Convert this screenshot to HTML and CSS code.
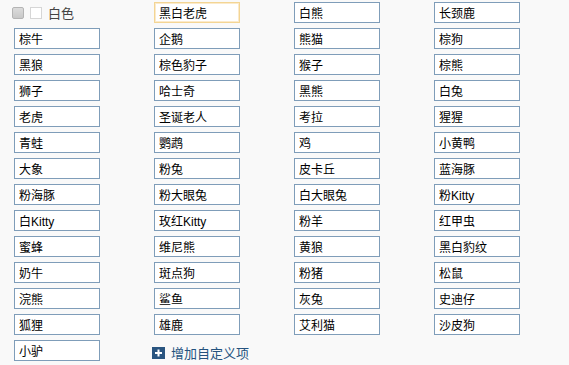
FILE: index.html
```html
<!DOCTYPE html>
<html lang="zh-CN">
<head>
  <meta charset="UTF-8" />
  <title>动物选项</title>
  <link rel="stylesheet" href="styles.css">
</head>
<body>
  <div class="options">
    <div class="cell color-pick">
      <span class="box box-disabled"></span>
      <span class="box"></span>
      <span class="color-label">白色</span>
    </div>
    <input class="opt focused" type="text" value="黑白老虎">
    <input class="opt" type="text" value="白熊">
    <input class="opt" type="text" value="长颈鹿">

    <input class="opt" type="text" value="棕牛">
    <input class="opt" type="text" value="企鹅">
    <input class="opt" type="text" value="熊猫">
    <input class="opt" type="text" value="棕狗">

    <input class="opt" type="text" value="黑狼">
    <input class="opt" type="text" value="棕色豹子">
    <input class="opt" type="text" value="猴子">
    <input class="opt" type="text" value="棕熊">

    <input class="opt" type="text" value="狮子">
    <input class="opt" type="text" value="哈士奇">
    <input class="opt" type="text" value="黑熊">
    <input class="opt" type="text" value="白兔">

    <input class="opt" type="text" value="老虎">
    <input class="opt" type="text" value="圣诞老人">
    <input class="opt" type="text" value="考拉">
    <input class="opt" type="text" value="猩猩">

    <input class="opt" type="text" value="青蛙">
    <input class="opt" type="text" value="鹦鹉">
    <input class="opt" type="text" value="鸡">
    <input class="opt" type="text" value="小黄鸭">

    <input class="opt" type="text" value="大象">
    <input class="opt" type="text" value="粉兔">
    <input class="opt" type="text" value="皮卡丘">
    <input class="opt" type="text" value="蓝海豚">

    <input class="opt" type="text" value="粉海豚">
    <input class="opt" type="text" value="粉大眼兔">
    <input class="opt" type="text" value="白大眼兔">
    <input class="opt" type="text" value="粉Kitty">

    <input class="opt" type="text" value="白Kitty">
    <input class="opt" type="text" value="玫红Kitty">
    <input class="opt" type="text" value="粉羊">
    <input class="opt" type="text" value="红甲虫">

    <input class="opt" type="text" value="蜜蜂">
    <input class="opt" type="text" value="维尼熊">
    <input class="opt" type="text" value="黄狼">
    <input class="opt" type="text" value="黑白豹纹">

    <input class="opt" type="text" value="奶牛">
    <input class="opt" type="text" value="斑点狗">
    <input class="opt" type="text" value="粉猪">
    <input class="opt" type="text" value="松鼠">

    <input class="opt" type="text" value="浣熊">
    <input class="opt" type="text" value="鲨鱼">
    <input class="opt" type="text" value="灰兔">
    <input class="opt" type="text" value="史迪仔">

    <input class="opt" type="text" value="狐狸">
    <input class="opt" type="text" value="雄鹿">
    <input class="opt" type="text" value="艾利猫">
    <input class="opt" type="text" value="沙皮狗">

    <input class="opt" type="text" value="小驴">
    <a class="cell add-link" href="#">
      <span class="add-icon">
        <svg width="13" height="12" viewBox="0 0 13 12">
          <rect x="3" y="5" width="7" height="2" fill="#fff"/>
          <rect x="5.5" y="2.5" width="2" height="7" fill="#fff"/>
        </svg>
      </span>
      增加自定义项
    </a>
  </div>
</body>
</html>
```

FILE: styles.css
```css
body {
  margin: 0;
  background: #f9f9f9;
  font-family: "Liberation Sans", "Noto Sans CJK SC", sans-serif;
  font-size: 12px;
  color: #333;
}

.options {
  display: grid;
  grid-template-columns: repeat(4, 86px);
  grid-auto-rows: 21px;
  column-gap: 54px;
  row-gap: 5px;
  padding: 2px 0 0 14px;
}

.opt {
  box-sizing: border-box;
  width: 86px;
  height: 21px;
  margin: 0;
  padding: 0 4px;
  border: 1px solid #7f9db9;
  background: #fff;
  font-family: "Liberation Sans", "Noto Sans CJK SC", sans-serif;
  font-size: 12px;
  color: #000;
  outline: none;
}

.opt.focused {
  border: 1px solid #f3d594;
  box-shadow: inset 0 0 0 1px #fbeacb;
}

.cell {
  display: flex;
  align-items: center;
}

.color-pick {
  margin-left: -2px;
  gap: 6px;
}

.box {
  box-sizing: border-box;
  width: 12px;
  height: 12px;
  border: 1px solid #d6d6d6;
  background: #fff;
}

.box-disabled {
  border-color: #b4b4b4;
  border-radius: 2px;
  background: linear-gradient(#dcdcdc, #c8c8c8);
}

.color-label {
  color: #444;
  font-size: 13px;
}

.add-link {
  margin-left: -2px;
  margin-top: 4px;
  gap: 6px;
  font-size: 13px;
  color: #24527e;
  text-decoration: none;
  white-space: nowrap;
}

.add-icon {
  display: flex;
  width: 13px;
  height: 12px;
  background: #2a5580;
}
```
